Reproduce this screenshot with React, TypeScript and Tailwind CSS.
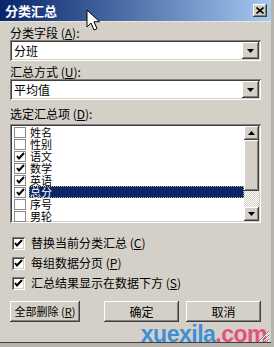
import React from "react"

const font = { fontFamily: '"Noto Sans CJK SC", "Liberation Sans", sans-serif' }

const sunken =
  "shadow-[inset_1px_1px_0_#808080,inset_-1px_-1px_0_#ffffff,inset_2px_2px_0_#404040,inset_-2px_-2px_0_#d4d0c8]"
const raised =
  "shadow-[inset_-1px_-1px_0_#404040,inset_1px_1px_0_#ffffff,inset_-2px_-2px_0_#808080,inset_2px_2px_0_#d4d0c8]"

function Key({ k }: { k: string }) {
  return (
    <span>
      (<span className="underline">{k}</span>)
    </span>
  )
}

function ArrowDown() {
  return (
    <svg width="7" height="4" viewBox="0 0 7 4">
      <path d="M0 0h7L3.5 4z" fill="#000" />
    </svg>
  )
}

function ArrowUp() {
  return (
    <svg width="7" height="4" viewBox="0 0 7 4">
      <path d="M0 4h7L3.5 0z" fill="#000" />
    </svg>
  )
}

function Tick() {
  return (
    <svg width="9" height="9" viewBox="0 0 9 9">
      <path d="M1 4l2 2.5L8 1" stroke="#000" strokeWidth="2" fill="none" />
    </svg>
  )
}

function Combo({ value }: { value: string }) {
  return (
    <div className={`flex items-center h-[21px] bg-white ${sunken} pl-[4px] pr-[2px]`}>
      <span className="flex-1 text-[12px] leading-none text-black">{value}</span>
      <div className={`w-[17px] h-[17px] bg-[#d4d0c8] ${raised} flex items-center justify-center`}>
        <ArrowDown />
      </div>
    </div>
  )
}

const items = [
  { label: "姓名", checked: false },
  { label: "性别", checked: false },
  { label: "语文", checked: true },
  { label: "数学", checked: true },
  { label: "英语", checked: true },
  { label: "总分", checked: true, selected: true },
  { label: "序号", checked: false },
  { label: "男轮", checked: false },
]

function Check({ label, k }: { label: string; k: string }) {
  return (
    <div className="flex items-center h-[20px] gap-[6px] pl-[2px]">
      <div className={`w-[13px] h-[13px] bg-white ${sunken} flex items-center justify-center`}>
        <Tick />
      </div>
      <span className="text-[12px] leading-none">
        {label}
        <Key k={k} />
      </span>
    </div>
  )
}

function Button({ children, w }: { children: React.ReactNode; w: string }) {
  return (
    <div className={`${w} h-[21px] bg-[#d4d0c8] ${raised} flex items-center justify-center text-[12px] leading-none whitespace-nowrap`}>
      {children}
    </div>
  )
}

export default function App() {
  return (
    <div
      className="relative w-[274px] h-[347px] bg-[#d4d0c8] text-black overflow-hidden border-r-[3px] border-b-[4px] border-r-[#b8b4ac] border-b-[#b8b4ac]"
      style={font}
    >
      <div className="h-[21px] flex items-center bg-gradient-to-r from-[#0a246a] to-[#a6caf0] pl-[5px] pr-[4px]">
        <span className="flex-1 text-white font-bold text-[13px] leading-none">分类汇总</span>
        <div className={`w-[14px] h-[13px] bg-[#d4d0c8] ${raised} flex items-center justify-center`}>
          <svg width="8" height="7" viewBox="0 0 8 7">
            <path d="M0.5 0.5l7 6M7.5 0.5l-7 6" stroke="#000" strokeWidth="1.6" />
          </svg>
        </div>
      </div>
      <div className="h-px bg-[#e8e6e0]" />

      <div className="flex flex-col pl-[10px] pr-[10px] pt-[3px]">
        <div className="h-[15px] text-[12px] leading-[15px]">
          分类字段 <Key k="A" />:
        </div>
        <Combo value="分班" />
        <div className="mt-[3px] h-[15px] text-[12px] leading-[15px]">
          汇总方式 <Key k="U" />:
        </div>
        <Combo value="平均值" />
        <div className="mt-[6px] h-[15px] text-[12px] leading-[15px]">
          选定汇总项 <Key k="D" />:
        </div>

        <div className={`mt-[3px] h-[99px] bg-white ${sunken} flex p-[2px]`}>
          <div className="flex-1 flex flex-col">
            {items.map((it) => (
              <div key={it.label} className="h-[12px] flex items-center">
                <div className="w-[12px] h-[11px] ml-[2px] border border-[#8a8a8a] bg-white flex items-center justify-center">
                  {it.checked && <Tick />}
                </div>
                <div
                  className={`flex-1 h-[12px] ml-[3px] pl-px text-[11px] leading-[12px] ${
                    it.selected
                      ? "bg-[#0a246a] text-white outline outline-1 outline-dotted outline-[#d0b060] -outline-offset-1"
                      : ""
                  }`}
                >
                  {it.label}
                </div>
              </div>
            ))}
          </div>
          <div className="w-[15px] flex flex-col">
            <div className={`h-[14px] bg-[#d4d0c8] ${raised} flex items-center justify-center`}>
              <ArrowUp />
            </div>
            <div className={`h-[51px] bg-[#d4d0c8] ${raised}`} />
            <div className="flex-1 bg-[repeating-conic-gradient(#ffffff_0_25%,#d4d0c8_0_50%)] bg-[length:2px_2px]" />
            <div className={`h-[14px] bg-[#d4d0c8] ${raised} flex items-center justify-center`}>
              <ArrowDown />
            </div>
          </div>
        </div>

        <div className="mt-[10px] flex flex-col">
          <Check label="替换当前分类汇总 " k="C" />
          <Check label="每组数据分页 " k="P" />
          <Check label="汇总结果显示在数据下方 " k="S" />
        </div>

        <div className="mt-[8px] flex gap-[24px]">
          <Button w="w-[73px]">
            <span className="text-[11px]">
              全部删除 <Key k="R" />
            </span>
          </Button>
          <div className="flex gap-[7px]">
            <Button w="w-[75px]">确定</Button>
            <Button w="w-[75px]">取消</Button>
          </div>
        </div>
      </div>

      <div className="absolute left-[0px] right-[0px] bottom-[0px] h-px bg-[#404040]" />

      <div
        className="absolute right-[4px] bottom-[-3px] text-[23px] font-bold leading-none tracking-[-0.5px]"
        style={{ fontFamily: '"Liberation Sans", Arial, sans-serif' }}
      >
        <span className="text-[#3d8fd6]">xuexila</span>
        <span className="text-[#e5507d]">.com</span>
      </div>

      <svg className="absolute right-[1px] bottom-[1px]" width="12" height="12" viewBox="0 0 12 12">
        <path d="M11 1L1 11M11 5L5 11M11 9L9 11" stroke="#808080" strokeWidth="1" />
        <path d="M11 2L2 11M11 6L6 11M11 10L10 11" stroke="#ffffff" strokeWidth="1" />
      </svg>

      <svg className="absolute left-[86px] top-[9px]" width="14" height="23" viewBox="0 0 14 23">
        <path d="M1 1v17l4-4 3 7 3-1.3-3-7h5.5z" fill="#fff" stroke="#000" strokeWidth="1" />
      </svg>
    </div>
  )
}
